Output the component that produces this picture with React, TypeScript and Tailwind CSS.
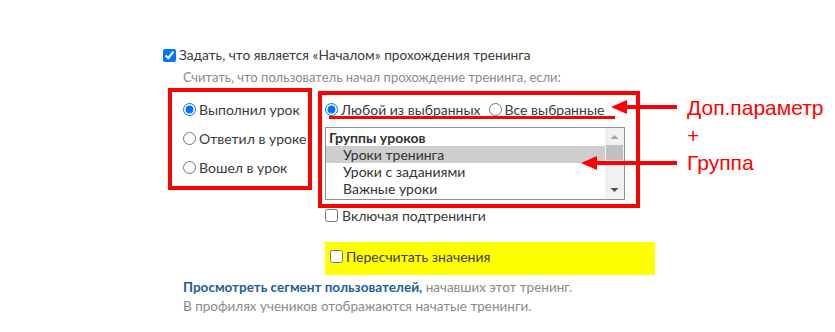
import React from "react";

const font = { fontFamily: "Lato, 'Liberation Sans', sans-serif" };

function Radio({ checked, label }: { checked?: boolean; label: string }) {
  return (
    <label className="flex items-center gap-[3px] h-[20px] whitespace-nowrap">
      <input type="radio" defaultChecked={checked} className="m-0 w-[13px] h-[13px] shrink-0" />
      <span>{label}</span>
    </label>
  );
}

export default function App() {
  return (
    <div className="relative w-[835px] h-[332px] bg-white text-[14px] text-[#3a3a3a] overflow-hidden" style={font}>
      <div className="pl-[163px] pt-[47px]">
        <label className="flex items-center gap-[3px] h-[16px] text-[13.7px]">
          <input type="checkbox" defaultChecked className="m-0 w-[13px] h-[13px]" />
          <span>Задать, что является «Началом» прохождения тренинга</span>
        </label>
        <div className="mt-[8px] h-[14px] pl-[20px] flex items-center text-[13px] text-[#8a8a8a]">
          Считать, что пользователь начал прохождение тренинга, если:
        </div>
        <div className="flex items-start mt-[3px]">
          <div className="ml-[5px] w-[144px] h-[102px] border-4 border-[#ff0000] pt-[7px] pl-[11px] flex flex-col gap-[9px]">
            <Radio checked label="Выполнил урок" />
            <Radio label="Ответил в уроке" />
            <Radio label="Вошел в урок" />
          </div>
          <div className="ml-[6px] flex flex-col">
            <div className="mt-[3px] w-[322px] h-[117px] border-4 border-[#ff0000] flex flex-col">
              <div className="pt-[7px] pl-[3px] h-[21px] flex items-center gap-[8px]">
                <Radio checked label="Любой из выбранных" />
                <Radio label="Все выбранные" />
              </div>
              <div className="ml-[7px] w-[286px] h-[3px] bg-[#ff0000]" />
              <div className="mt-[8px] ml-[3px] w-[300px] h-[73px] border border-[#8f8f8f] flex">
                <div className="flex-1 flex flex-col text-[#333]">
                  <div className="h-[18px] pl-[3px] flex items-center font-bold">Группы уроков</div>
                  <div className="h-[17px] pl-[17px] flex items-center bg-[#cecece]">Уроки тренинга</div>
                  <div className="h-[17px] pl-[17px] flex items-center">Уроки с заданиями</div>
                  <div className="h-[17px] pl-[17px] flex items-center">Важные уроки</div>
                </div>
                <div className="w-[19px] bg-[#f1f1f1] flex flex-col items-center">
                  <svg width="19" height="17" viewBox="0 0 19 17">
                    <path d="M5.5 11 L9.5 7 L13.5 11 Z" fill="#a3a3a3" />
                  </svg>
                  <div className="w-[17px] h-[15px] bg-[#c1c1c1]" />
                  <div className="flex-1" />
                  <svg width="19" height="17" viewBox="0 0 19 17">
                    <path d="M5.5 6 L9.5 10 L13.5 6 Z" fill="#505050" />
                  </svg>
                </div>
              </div>
            </div>
            <label className="ml-[7px] mt-[-1px] h-[16px] flex items-center gap-[4px]">
              <input type="checkbox" className="m-0 w-[13px] h-[13px]" />
              <span>Включая подтренинги</span>
            </label>
            <div className="ml-[7px] mt-[19px] w-[330px] h-[33px] bg-[#ffff00] pl-[5px] pt-[7px]">
              <label className="flex items-center gap-[3px] h-[14px]">
                <input type="checkbox" className="m-0 w-[13px] h-[13px]" />
                <span>Пересчитать значения</span>
              </label>
            </div>
          </div>
        </div>
        <div className="mt-[3px] pl-[20px] leading-[19px] text-[13.5px] text-[#8a8a8a]">
          <div>
            <span className="font-bold text-[#1d5e9a]">Просмотреть сегмент пользователей,</span> начавших этот тренинг.
          </div>
          <div>В профилях учеников отображаются начатые тренинги.</div>
        </div>
      </div>

      <svg className="absolute left-0 top-0 pointer-events-none" width="835" height="332">
        <line x1="622" y1="107" x2="677" y2="107" stroke="#ff0000" strokeWidth="4" />
        <path d="M611 107 L627 100 L627 114 Z" fill="#ff0000" />
        <line x1="592" y1="163" x2="677" y2="163" stroke="#ff0000" strokeWidth="4" />
        <path d="M581 163 L597 156 L597 170 Z" fill="#ff0000" />
      </svg>
      <div className="absolute left-[687px] top-[94px] text-[21px] leading-[27.5px] text-[#ff0000]" style={{ fontFamily: "'Liberation Sans', Arial, sans-serif" }}>
        <div>Доп.параметр</div>
        <div>+</div>
        <div>Группа</div>
      </div>
    </div>
  );
}
